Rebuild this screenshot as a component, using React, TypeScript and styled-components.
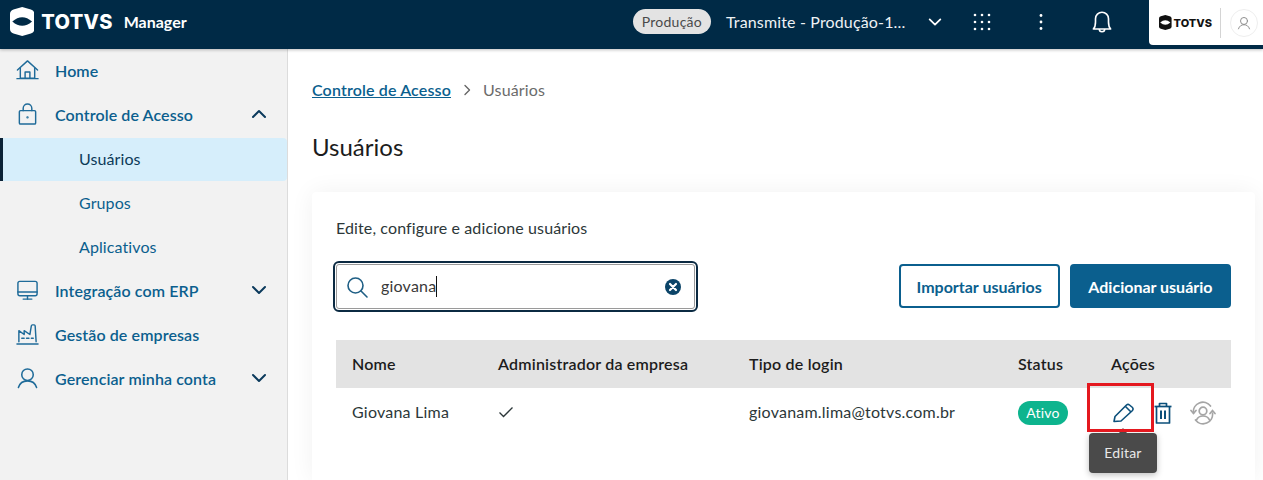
import React from "react";
import styled, {createGlobalStyle} from "styled-components";

const GlobalStyle = createGlobalStyle`
  html, body {
    margin: 0;
    padding: 0;
    height: 480px;
    overflow: hidden;
    background: #fff;
    font-family: "Lato", "Noto Sans", sans-serif;
  }
  * { box-sizing: border-box; }
`;

const Page = styled.div`
  width: 1263px;
  height: 480px;
  display: flex;
  flex-direction: column;
  overflow: hidden;
`;

const Header = styled.header`
  height: 49px;
  flex: none;
  display: flex;
  align-items: flex-start;
  background: #002a46;
  box-shadow: 0 1px 3px rgba(0, 0, 0, 0.25);
  position: relative;
  z-index: 2;
`;

const Brand = styled.div`
  display: flex;
  align-items: center;
  height: 43px;
  padding-left: 10px;
  flex: 1;
`;

const BrandWord = styled.span<{ $small?: boolean }>`
  font-family: "Inter", "Liberation Sans", sans-serif;
  font-weight: 800;
  font-size: ${({$small}) => ($small ? "11px" : "20px")};
  letter-spacing: ${({$small}) => ($small ? "0" : "0.3px")};
  color: ${({$small}) => ($small ? "#111" : "#fff")};
  margin-left: ${({$small}) => ($small ? "2px" : "7px")};
`;

const ManagerLabel = styled.span`
  color: #fff;
  font-size: 16px;
  font-weight: 700;
  margin-left: 11px;
`;

const EnvPill = styled.span`
  height: 25px;
  padding: 0 9px;
  margin-top: 9px;
  border-radius: 13px;
  background: #e3e3e3;
  color: #4a4a4a;
  font-size: 14px;
  letter-spacing: 0.25px;
  line-height: 25px;
`;

const EnvName = styled.span`
  color: #eef2f5;
  font-size: 16px;
  letter-spacing: 0.15px;
  line-height: 44px;
  margin-left: 15px;
  width: 200px;
`;

const HeaderIcon = styled.span<{ $width: number }>`
  width: ${({$width}) => $width}px;
  height: 44px;
  display: flex;
  align-items: center;
  justify-content: center;
  flex: none;
`;

const UserArea = styled.div`
  width: 114px;
  height: 45px;
  margin-left: 7px;
  padding-left: 10px;
  display: flex;
  align-items: center;
  background: #fff;
  border-bottom-left-radius: 4px;
`;

const UserDivider = styled.span`
  width: 1px;
  height: 30px;
  background: #d4d4d4;
  margin: 0 9px 0 8px;
`;

const Avatar = styled.span`
  width: 28px;
  height: 28px;
  border: 1px solid #eee;
  border-radius: 50%;
  display: flex;
  align-items: center;
  justify-content: center;
`;

const Body = styled.div`
  display: flex;
  flex: 1;
  min-height: 0;
`;

const Sidebar = styled.nav`
  width: 288px;
  flex: none;
  background: #f2f2f2;
  border-right: 1px solid #dcdcdc;
`;

const NavRow = styled.div<{ $active?: boolean; $sub?: boolean }>`
  height: 44px;
  display: flex;
  align-items: center;
  padding-left: ${({$sub}) => ($sub ? "79px" : "16px")};
  padding-right: 19px;
  padding-bottom: 2px;
  font-size: 16px;
  letter-spacing: 0.1px;
  font-weight: ${({$sub}) => ($sub ? 400 : 600)};
  color: ${({$active}) => ($active ? "#0c3a58" : "#0b5f8e")};
  ${({$active}) => $active && `
    height: 43px;
    margin-top: 1px;
    padding-left: 76px;
    background: #d6eefb;
    border-left: 3px solid #0b2236;
    border-radius: 0 4px 4px 0;
  `}
`;

const NavIcon = styled.span`
  width: 23px;
  height: 24px;
  margin-right: 16px;
  display: flex;
  align-items: center;
  justify-content: center;
`;

const NavLabel = styled.span`
  flex: 1;
`;

const Main = styled.main`
  flex: 1;
  padding: 0 8px 0 24px;
  background: #fff;
`;

const Breadcrumb = styled.div`
  height: 82px;
  padding-bottom: 1px;
  display: flex;
  align-items: center;
  font-size: 16px;
  letter-spacing: 0.15px;
`;

const CrumbLink = styled.a`
  color: #0b5f8e;
  font-weight: 600;
  text-decoration: underline;
`;

const CrumbSep = styled.span`
  margin: 0 12px;
  display: flex;
`;

const CrumbCurrent = styled.span`
  color: #6b6b6b;
`;

const Title = styled.h1`
  margin: 0;
  height: 61px;
  font-size: 24px;
  line-height: 32px;
  font-weight: 400;
  color: #1c1c1c;
`;

const Card = styled.section`
  height: 288px;
  padding: 24px;
  background: #fff;
  border-radius: 4px 4px 0 0;
  box-shadow: 0 0 24px rgba(0, 0, 0, 0.06);
`;

const Lead = styled.p`
  margin: 0;
  height: 24px;
  font-size: 16px;
  line-height: 24px;
  letter-spacing: 0.11px;
  color: #2c3739;
`;

const Toolbar = styled.div`
  display: flex;
  align-items: flex-start;
  margin-top: 24px;
  gap: 10px;
`;

const SearchBox = styled.div`
  width: 359px;
  height: 45px;
  margin-right: auto;
  display: flex;
  align-items: center;
  padding: 0 12px 0 8px;
  border: 1px solid #9a9a9a;
  border-radius: 3px;
  outline: 2px solid #0b2a42;
  outline-offset: 1px;
`;

const SearchText = styled.span`
  flex: 1;
  margin-left: 12px;
  font-size: 16px;
  letter-spacing: 0.2px;
  color: #3a3a3a;
`;

const Caret = styled.span`
  display: inline-block;
  width: 1px;
  height: 21px;
  background: #111;
  vertical-align: -5px;
`;

const Button = styled.button<{ $primary?: boolean }>`
  height: 44px;
  padding: 0 ${({$primary}) => ($primary ? "16.5px" : "16px")};
  border: 2px solid #0b5f8e;
  border-radius: 4px;
  font: 700 16px "Lato", "Noto Sans", sans-serif;
  color: ${({$primary}) => ($primary ? "#fff" : "#0b5f8e")};
  background: ${({$primary}) => ($primary ? "#0b5f8e" : "#fff")};
`;

const Table = styled.div`
  margin-top: 31px;
`;

const Row = styled.div<{ $head?: boolean }>`
  height: ${({$head}) => ($head ? "48px" : "50px")};
  display: grid;
  grid-template-columns: 146px 251px 269px 93px 1fr;
  align-items: center;
  padding-left: 16px;
  padding-top: ${({$head}) => ($head ? "2px" : "0")};
  font-size: 16px;
  letter-spacing: ${({$head}) => ($head ? "0.2px" : "0.22px")};
  font-weight: ${({$head}) => ($head ? 600 : 400)};
  color: ${({$head}) => ($head ? "#1c1c1c" : "#2c3739")};
  background: ${({$head}) => ($head ? "#e3e3e3" : "transparent")};
`;

const Cell = styled.span`
  padding-bottom: 3px;
`;

const CheckCell = styled(Cell)`
  display: flex;
`;

const StatusTag = styled.span`
  width: 50px;
  height: 24px;
  border-radius: 12px;
  background: #0db48e;
  color: #fff;
  font-size: 14px;
  letter-spacing: 0.2px;
  line-height: 23px;
  text-align: center;
`;

const Actions = styled.div`
  display: flex;
  align-items: center;
  position: relative;
  height: 24px;
  padding-left: 1px;
`;

const ActionIcon = styled.span<{ $width: number }>`
  width: ${({$width}) => $width}px;
  display: flex;
  justify-content: center;
`;

const Highlight = styled.span`
  position: absolute;
  left: -24px;
  top: -18px;
  width: 67px;
  height: 49px;
  border: 3px solid #e4181f;
  z-index: 1;
`;

const Tooltip = styled.span`
  position: absolute;
  left: -22px;
  top: 32px;
  width: 68px;
  height: 40px;
  border-radius: 4px;
  background: #4a4a4a;
  color: #e8e8e8;
  font-size: 14px;
  letter-spacing: 0.2px;
  line-height: 39px;
  text-align: center;
  box-shadow: 0 2px 6px rgba(0, 0, 0, 0.25);

  &::before {
    content: "";
    position: absolute;
    left: 30px;
    top: -5px;
    border-left: 4px solid transparent;
    border-right: 4px solid transparent;
    border-bottom: 5px solid #4a4a4a;
  }
`;

const Logo = ({size, fill, eye}: { size: number; fill: string; eye: string }) => (
    <svg width={size * 0.84} height={size} viewBox="0 0 42 50">
        <path fill={fill} d="M21 0 L36 4.5 Q42 6.5 42 12 V38 Q42 43.5 36 45.5 L21 50 L6 45.5 Q0 43.5 0 38 V12 Q0 6.5 6 4.5 Z"/>
        <path fill={eye} d="M4 25 Q21 10 38 25 Q21 40 4 25 Z"/>
    </svg>
);

const stroke = {fill: "none", stroke: "#1f6b99", strokeWidth: 1.5, strokeLinecap: "round", strokeLinejoin: "round"} as const;

const Chevron = ({up, color = "#0b3a5c", size = 18}: { up?: boolean; color?: string; size?: number }) => (
    <svg width={size} height={size} viewBox="0 0 18 18" fill="none" stroke={color} strokeWidth="2" strokeLinecap="round" strokeLinejoin="round">
        <path d={up ? "M3 12 L9 6 L15 12" : "M3 6 L9 12 L15 6"}/>
    </svg>
);

const CrumbArrow = () => (
    <svg width="8" height="12" viewBox="0 0 8 12" fill="none" stroke="#666" strokeWidth="1.4" strokeLinecap="round" strokeLinejoin="round">
        <path d="M2 1.5 L6.5 6 L2 10.5"/>
    </svg>
);

const HomeIcon = () => (
    <svg width="24" height="24" viewBox="0 0 24 24" {...stroke}>
        <path d="M1.5 12 L12 2.5 L22.5 12"/>
        <path d="M4.5 10 V20.5 H19.5 V10"/>
        <path d="M1 21 H23"/>
        <path d="M9.5 20.5 V14 H14.5 V20.5"/>
    </svg>
);

const LockIcon = () => (
    <svg width="24" height="24" viewBox="0 0 24 24" {...stroke}>
        <rect x="3.5" y="8.5" width="17" height="14" rx="1.2"/>
        <path d="M7.5 8.5 V6 a4.5 4.5 0 0 1 9 0 V8.5"/>
        <circle cx="12" cy="15.5" r="0.5"/>
    </svg>
);

const MonitorIcon = () => (
    <svg width="24" height="24" viewBox="0 0 24 24" {...stroke}>
        <rect x="2" y="3" width="20" height="15" rx="2"/>
        <path d="M2 14 H22"/>
        <path d="M12 18 V21.5"/>
        <path d="M7.5 21.5 H16.5"/>
    </svg>
);

const FactoryIcon = () => (
    <svg width="24" height="24" viewBox="0 0 24 24" {...stroke}>
        <path d="M3 20 V8.5 L8.5 12.5 V8.5 L14.5 12.5 L16 3.5 Q16.2 2.5 17 2.5 H19 Q19.8 2.5 20 3.5 L21 20"/>
        <path d="M1 22.5 H23"/>
        <path d="M6 16.5 H8.5 M11 16.5 H13.5 M16 16.5 H18"/>
    </svg>
);

const PersonIcon = ({color = "#1f6b99", size = 24}: { color?: string; size?: number }) => (
    <svg width={size} height={size} viewBox="0 0 24 24" fill="none" stroke={color} strokeWidth="1.6" strokeLinecap="round">
        <circle cx="12" cy="8.5" r="6"/>
        <path d="M2.5 22 C4 17 8 15 12 15 C16 15 20 17 21.5 22"/>
    </svg>
);

const GridIcon = () => (
    <svg width="18" height="18" viewBox="0 0 18 18" fill="#fff">
        {[2, 9, 16].flatMap(y => [2, 9, 16].map(x => <circle key={`${x}-${y}`} cx={x} cy={y} r="1.3"/>))}
    </svg>
);

const DotsIcon = () => (
    <svg width="6" height="18" viewBox="0 0 6 18" fill="#fff">
        <circle cx="3" cy="2.5" r="1.4"/>
        <circle cx="3" cy="9" r="1.4"/>
        <circle cx="3" cy="15.5" r="1.4"/>
    </svg>
);

const BellIcon = () => (
    <svg width="26" height="26" viewBox="0 0 24 24" fill="none" stroke="#fff" strokeWidth="1.5" strokeLinejoin="round">
        <path d="M4 18.5 C5.5 17 6 15 6 12 V9 a6 6 0 0 1 12 0 V12 C18 15 18.5 17 20 18.5 Z"/>
        <path d="M9.5 18.5 a2.5 2.5 0 0 0 5 0"/>
    </svg>
);

const SearchIcon = () => (
    <svg width="24" height="24" viewBox="0 0 24 24" fill="none" stroke="#1f5f85" strokeWidth="1.6" strokeLinecap="round">
        <circle cx="10.5" cy="10.5" r="7.5"/>
        <path d="M16 16 L22 22"/>
    </svg>
);

const ClearIcon = () => (
    <svg width="18" height="18" viewBox="0 0 18 18">
        <circle cx="9" cy="9" r="8" fill="#0b4468"/>
        <path d="M6 6 L12 12 M12 6 L6 12" stroke="#fff" strokeWidth="2.2" strokeLinecap="round"/>
    </svg>
);

const PencilIcon = () => (
    <svg width="24" height="24" viewBox="0 0 24 24" fill="none" stroke="#0b4f7a" strokeWidth="1.6" strokeLinejoin="round">
        <path d="M2 20.5 L3 15.5 L14.5 4 Q16 2.8 17.5 4 L20.5 6.5 Q21.8 8 20.5 9.5 L9 20 Z"/>
        <path d="M13.5 5.5 L19 11"/>
    </svg>
);

const TrashIcon = () => (
    <svg width="20" height="24" viewBox="0 0 20 24" fill="none" stroke="#0b4f7a" strokeWidth="1.7" strokeLinejoin="round">
        <path d="M1.5 5.5 H18.5"/>
        <path d="M6.5 5.5 V2.5 H13.5 V5.5"/>
        <path d="M3.5 5.5 V22 H16.5 V5.5"/>
        <path d="M8 9.5 V18 M12 9.5 V18" strokeWidth="2"/>
    </svg>
);

const ResetUserIcon = () => (
    <svg width="26" height="24" viewBox="0 0 26 24" fill="none" stroke="#a5a5a5" strokeWidth="1.7" strokeLinecap="round">
        <circle cx="13" cy="10" r="3.8"/>
        <path d="M6.5 19 C8 15.5 10.5 15 13 15 C15.5 15 18 15.5 19.5 19"/>
        <path d="M3.5 12 A9.5 9.5 0 0 1 20.5 5"/>
        <path d="M22.5 12 A9.5 9.5 0 0 1 5.5 19"/>
        <path d="M1 9.5 L3.5 12.5 L6 9.5"/>
        <path d="M20 12.5 L22.5 9.5 L25 12.5"/>
    </svg>
);

const CheckIcon = () => (
    <svg width="16" height="16" viewBox="0 0 16 16" fill="none" stroke="#2c3739" strokeWidth="1.3">
        <path d="M1.5 8.5 L5.5 12.5 L14.5 3.5"/>
    </svg>
);

const App: React.FC = () => (
    <Page>
        <GlobalStyle/>
        <Header>
            <Brand>
                <Logo size={29} fill="#fff" eye="#002a46"/>
                <BrandWord>TOTVS</BrandWord>
                <ManagerLabel>Manager</ManagerLabel>
            </Brand>
            <EnvPill>Produção</EnvPill>
            <EnvName>Transmite - Produção-1...</EnvName>
            <HeaderIcon $width={18}><Chevron color="#fff" size={16}/></HeaderIcon>
            <HeaderIcon $width={76}><GridIcon/></HeaderIcon>
            <HeaderIcon $width={42}><DotsIcon/></HeaderIcon>
            <HeaderIcon $width={80}><BellIcon/></HeaderIcon>
            <UserArea>
                <Logo size={15} fill="#111" eye="#fff"/>
                <BrandWord $small>TOTVS</BrandWord>
                <UserDivider/>
                <Avatar><PersonIcon color="#888" size={14}/></Avatar>
            </UserArea>
        </Header>
        <Body>
            <Sidebar>
                <NavRow><NavIcon><HomeIcon/></NavIcon><NavLabel>Home</NavLabel></NavRow>
                <NavRow><NavIcon><LockIcon/></NavIcon><NavLabel>Controle de Acesso</NavLabel><Chevron up/></NavRow>
                <NavRow $sub $active>Usuários</NavRow>
                <NavRow $sub>Grupos</NavRow>
                <NavRow $sub>Aplicativos</NavRow>
                <NavRow><NavIcon><MonitorIcon/></NavIcon><NavLabel>Integração com ERP</NavLabel><Chevron/></NavRow>
                <NavRow><NavIcon><FactoryIcon/></NavIcon><NavLabel>Gestão de empresas</NavLabel></NavRow>
                <NavRow><NavIcon><PersonIcon/></NavIcon><NavLabel>Gerenciar minha conta</NavLabel><Chevron/></NavRow>
            </Sidebar>
            <Main>
                <Breadcrumb>
                    <CrumbLink>Controle de Acesso</CrumbLink>
                    <CrumbSep><CrumbArrow/></CrumbSep>
                    <CrumbCurrent>Usuários</CrumbCurrent>
                </Breadcrumb>
                <Title>Usuários</Title>
                <Card>
                    <Lead>Edite, configure e adicione usuários</Lead>
                    <Toolbar>
                        <SearchBox>
                            <SearchIcon/>
                            <SearchText>giovana<Caret/></SearchText>
                            <ClearIcon/>
                        </SearchBox>
                        <Button>Importar usuários</Button>
                        <Button $primary>Adicionar usuário</Button>
                    </Toolbar>
                    <Table>
                        <Row $head>
                            <Cell>Nome</Cell>
                            <Cell>Administrador da empresa</Cell>
                            <Cell>Tipo de login</Cell>
                            <Cell>Status</Cell>
                            <Cell>Ações</Cell>
                        </Row>
                        <Row>
                            <Cell>Giovana Lima</Cell>
                            <CheckCell><CheckIcon/></CheckCell>
                            <Cell>giovanam.lima@totvs.com.br</Cell>
                            <StatusTag>Ativo</StatusTag>
                            <Actions>
                                <ActionIcon $width={24}><PencilIcon/></ActionIcon>
                                <ActionIcon $width={54}><TrashIcon/></ActionIcon>
                                <ActionIcon $width={26}><ResetUserIcon/></ActionIcon>
                                <Highlight/>
                                <Tooltip>Editar</Tooltip>
                            </Actions>
                        </Row>
                    </Table>
                </Card>
            </Main>
        </Body>
    </Page>
);

export default App;
